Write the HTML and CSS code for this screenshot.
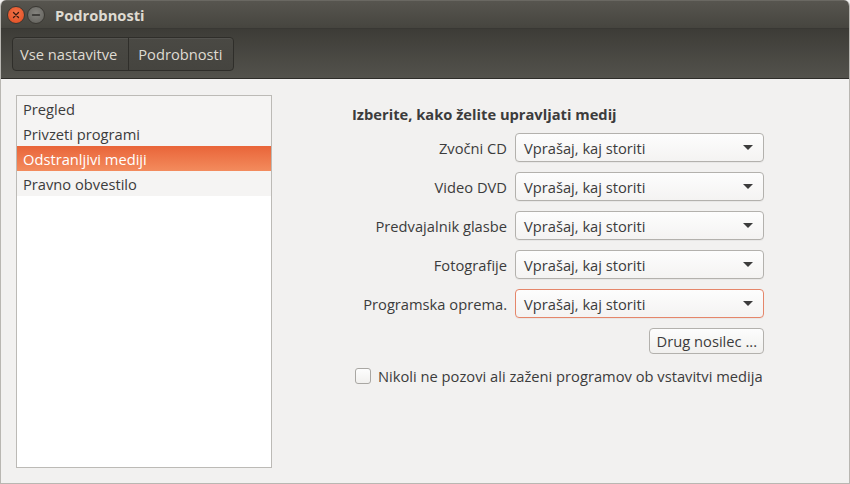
FILE: index.html
```html
<!DOCTYPE html>
<html lang="sl">
<head>
<meta charset="utf-8">
<link rel="stylesheet" href="styles.css">
</head>
<body>
<div class="window">
  <div class="titlebar">
    <span class="wbtn close"><svg width="16" height="16" viewBox="0 0 16 16"><path d="M5.5 5.5 L10.5 10.5 M10.5 5.5 L5.5 10.5" stroke="#3a1a10" stroke-width="1.3" stroke-linecap="round"/></svg></span>
    <span class="wbtn min"><svg width="16" height="16" viewBox="0 0 16 16"><path d="M4.5 8 H11.5" stroke="#2e2d2a" stroke-width="1.4" stroke-linecap="round"/></svg></span>
    <span class="title">Podrobnosti</span>
  </div>
  <div class="toolbar">
    <div class="crumbs">
      <span class="crumb">Vse nastavitve</span>
      <span class="crumb">Podrobnosti</span>
    </div>
  </div>
  <div class="content">
    <ul class="list">
      <li class="row">Pregled</li>
      <li class="row">Privzeti programi</li>
      <li class="row sel">Odstranljivi mediji</li>
      <li class="row">Pravno obvestilo</li>
    </ul>
    <div class="panel">
      <div class="heading">Izberite, kako želite upravljati medij</div>
      <div class="form">
        <div class="frow"><span class="lbl">Zvočni CD</span><div class="combo"><span>Vprašaj, kaj storiti</span><span class="arrow"></span></div></div>
        <div class="frow"><span class="lbl">Video DVD</span><div class="combo"><span>Vprašaj, kaj storiti</span><span class="arrow"></span></div></div>
        <div class="frow"><span class="lbl">Predvajalnik glasbe</span><div class="combo"><span>Vprašaj, kaj storiti</span><span class="arrow"></span></div></div>
        <div class="frow"><span class="lbl">Fotografije</span><div class="combo"><span>Vprašaj, kaj storiti</span><span class="arrow"></span></div></div>
        <div class="frow"><span class="lbl">Programska oprema.</span><div class="combo focus"><span>Vprašaj, kaj storiti</span><span class="arrow"></span></div></div>
        <div class="brow"><span class="button">Drug nosilec ...</span></div>
      </div>
      <label class="check"><span class="box"></span><span>Nikoli ne pozovi ali zaženi programov ob vstavitvi medija</span></label>
    </div>
  </div>
</div>
</body>
</html>
```
FILE: styles.css
```css
* { box-sizing: border-box; }
html, body { margin: 0; padding: 0; background: #f2f1f0; }
body {
  width: 850px; height: 484px; overflow: hidden;
  font-family: "Open Sans", "Noto Sans", sans-serif;
  font-size: 14.7px; color: #3c3c3c;
}
.window {
  width: 850px; height: 484px;
  display: flex; flex-direction: column;
  border: 1px solid #b9b7b2; border-top: none;
  border-radius: 6px 6px 0 0;
  overflow: hidden;
  background: #f2f1f0;
}
.titlebar {
  height: 28px; flex: none;
  display: flex; align-items: center;
  padding-left: 6px;
  background: linear-gradient(#57554f, #46453f);
  border-top: 1px solid #6a6862;
}
.wbtn {
  width: 18px; height: 18px; border-radius: 50%;
  display: flex; align-items: center; justify-content: center;
  margin-right: 2px;
}
.wbtn.close { background: radial-gradient(circle at 50% 40%, #f3744a, #df4a1f); border: 1px solid #3a3833; }
.wbtn.min { background: radial-gradient(circle at 50% 40%, #85847f, #5f5e59); border: 1px solid #3a3833; }
.title { margin-left: 8px; font-weight: bold; color: #dfdbd2; font-size: 14.7px; }
.toolbar {
  height: 51px; flex: none;
  display: flex; align-items: center;
  padding-left: 11px;
  background: linear-gradient(#3d3c37, #53524c);
  border-bottom: 1px solid #2e2d29;
  border-top: 1px solid #393834;
}
.crumbs {
  display: flex; height: 34px;
  border: 1px solid #2f2e2a; border-radius: 4px;
  background: linear-gradient(#4a4944, #45443f);
  box-shadow: inset 0 1px 0 rgba(255,255,255,0.06);
}
.crumb {
  display: flex; align-items: center;
  padding: 0 11px 0 7px; color: #dfdbd2;
}
.crumb + .crumb { border-left: 1px solid #2f2e2a; padding-left: 9px; padding-right: 10px; }
.content {
  flex: 1; display: flex;
  padding: 16px 0 15px 15px;
}
.list {
  list-style: none; margin: 0; padding: 0;
  width: 256px; background: #fff;
  border: 1px solid #bcbab6;
}
.row {
  height: 25px; padding-left: 6px;
  display: flex; align-items: center;
  background: #f5f4f3; color: #3c3c3c;
}
.row.sel { background: linear-gradient(#e96539, #f38b5d); color: #fff; }
.panel { flex: 1; padding: 5px 0 0 80px; display: flex; flex-direction: column; }
.heading { font-weight: bold; height: 27px; display: flex; align-items: center; }
.form { display: flex; flex-direction: column; gap: 10px; width: 412px; margin-top: 6px; }
.frow { display: flex; align-items: center; justify-content: flex-end; gap: 8px; }
.lbl { color: #3c3c3c; }
.combo {
  width: 249px; height: 29px;
  display: flex; align-items: center; justify-content: space-between;
  padding: 0 10px 0 8px;
  border: 1px solid #b3b1ad; border-radius: 4px;
  background: linear-gradient(#fdfdfd, #f4f3f2);
  box-shadow: 0 1px 0 rgba(0,0,0,0.04);
}
.combo.focus { border-color: #e5866a; }
.arrow {
  width: 0; height: 0;
  border-left: 5px solid transparent; border-right: 5px solid transparent;
  border-top: 5px solid #3c3c3c;
}
.brow { display: flex; justify-content: flex-end; }
.button {
  height: 26px; padding: 0 6px 0 7px;
  display: flex; align-items: center;
  border: 1px solid #b3b1ad; border-radius: 4px;
  background: linear-gradient(#fdfdfd, #f1f0ee);
}
.check { display: flex; align-items: center; margin: 12px 0 0 3px; gap: 7px; }
.box {
  width: 16px; height: 16px;
  border: 1px solid #a9a7a3; border-radius: 3px;
  background: linear-gradient(#fdfdfd, #f1f0ee);
}
```
